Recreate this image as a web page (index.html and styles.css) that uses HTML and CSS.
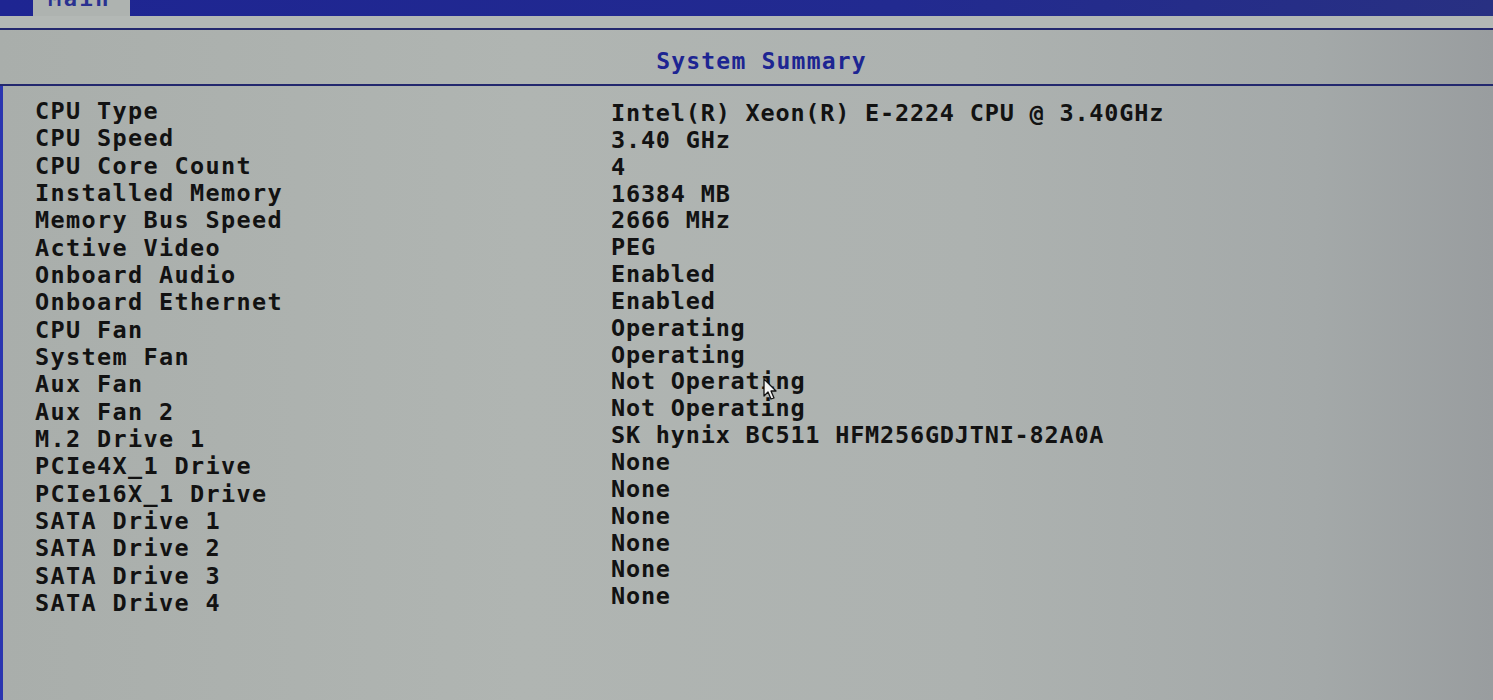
FILE: index.html
```html
<!DOCTYPE html>
<html>
<head>
<meta charset="utf-8">
<link rel="stylesheet" href="styles.css">
</head>
<body>
<div class="screen">
  <div class="topbar">
    <div class="tab"><span class="tab-text">Main</span></div>
  </div>
  <div class="strip"></div>
  <div class="header">
    <h1 class="title">System Summary</h1>
  </div>
  <div class="panel">
    <div class="labels">
      <div>CPU Type</div>
      <div>CPU Speed</div>
      <div>CPU Core Count</div>
      <div>Installed Memory</div>
      <div>Memory Bus Speed</div>
      <div>Active Video</div>
      <div>Onboard Audio</div>
      <div>Onboard Ethernet</div>
      <div>CPU Fan</div>
      <div>System Fan</div>
      <div>Aux Fan</div>
      <div>Aux Fan 2</div>
      <div>M.2 Drive 1</div>
      <div>PCIe4X_1 Drive</div>
      <div>PCIe16X_1 Drive</div>
      <div>SATA Drive 1</div>
      <div>SATA Drive 2</div>
      <div>SATA Drive 3</div>
      <div>SATA Drive 4</div>
    </div>
    <div class="values">
      <div>Intel(R) Xeon(R) E-2224 CPU @ 3.40GHz</div>
      <div>3.40 GHz</div>
      <div>4</div>
      <div>16384 MB</div>
      <div>2666 MHz</div>
      <div>PEG</div>
      <div>Enabled</div>
      <div>Enabled</div>
      <div>Operating</div>
      <div>Operating</div>
      <div>Not Operating</div>
      <div>Not Operating</div>
      <div>SK hynix BC511 HFM256GDJTNI-82A0A</div>
      <div>None</div>
      <div>None</div>
      <div>None</div>
      <div>None</div>
      <div>None</div>
      <div>None</div>
    </div>
    <svg class="cursor" width="16" height="24" viewBox="0 0 16 24">
      <path d="M1 1 L1 18 L5 14 L8 21 L11 20 L8 13 L13 13 Z" fill="#f4f4f4" stroke="#111" stroke-width="1.3" stroke-linejoin="round"/>
    </svg>
  </div>
</div>
</body>
</html>
```

FILE: styles.css
```css
html, body {
  margin: 0;
  padding: 0;
}
body {
  width: 1493px;
  height: 700px;
  overflow: hidden;
  background: linear-gradient(to right, #a9aeab 0%, #b0b5b2 35%, #adb2b0 65%, #a4a9a9 88%, #999d9f 100%);
  font-family: "DejaVu Sans Mono", "Liberation Mono", monospace;
  font-weight: bold;
  color: #121212;
}
.screen {
  display: flex;
  flex-direction: column;
  height: 700px;
}
.topbar {
  height: 16px;
  background: linear-gradient(to right, #1e2592 0%, #222a90 60%, #283082 100%);
  display: flex;
  padding-left: 33px;
}
.tab {
  width: 97px;
  height: 16px;
  background: #aeb3b0;
  overflow: hidden;
}
.tab-text {
  display: block;
  margin-top: -12px;
  margin-left: 15px;
  font-size: 22px;
  line-height: 22px;
  letter-spacing: 2.5px;
  color: #2a3190;
}
.strip {
  height: 12px;
  background: #b3b8b5;
  border-bottom: 2px solid #23286e;
}
.header {
  height: 54px;
  display: flex;
  align-items: center;
  justify-content: center;
  padding-left: 30px;
  border-bottom: 2px solid #23286e;
}
.title {
  margin: 0;
  margin-top: 7px;
  font-size: 23px;
  font-weight: bold;
  letter-spacing: 1.2px;
  color: #1d2592;
}
.panel {
  flex: 1;
  display: flex;
  padding-top: 12px;
  padding-left: 32px;
  border-left: 3px solid #2a35b0;
  position: relative;
}
.labels {
  width: 576px;
  font-size: 23.5px;
  line-height: 27.33px;
  letter-spacing: 1.35px;
}
.values {
  padding-top: 2px;
  font-size: 23.5px;
  line-height: 26.85px;
  letter-spacing: 0.8px;
}
.labels div, .values div {
  white-space: pre;
}
.cursor {
  position: absolute;
  left: 760px;
  top: 292px;
}
```
